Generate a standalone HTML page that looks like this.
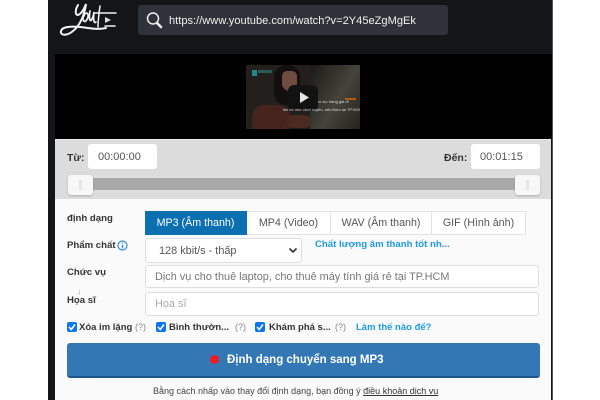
<!DOCTYPE html>
<html><head><meta charset="utf-8">
<style>
*{box-sizing:border-box}
html,body{margin:0;padding:0;width:600px;height:400px;overflow:hidden;background:#fff;font-family:"Liberation Sans","Noto Sans CJK SC",sans-serif}
#w{position:absolute;left:0;top:0;width:600px;height:400px;filter:blur(.35px)}
.a{position:absolute;white-space:nowrap}
.lbl{font-size:9.6px;font-weight:bold;color:#333;line-height:12px}
.inp{background:#fff;border:1px solid #ddd;border-radius:3px;font-size:10.9px;color:#666;line-height:23px;padding-left:9px}
.tab{top:211px;height:24px;border:1px solid #e3e3e3;border-left:none;background:#fff;font-size:10.7px;color:#555;text-align:center;line-height:23px}
.cb{width:10px;height:10px;background:#0a76f0;border-radius:2px;top:322px}
.cl{top:322px;font-size:9.5px;font-weight:bold;color:#333;line-height:12px}
.q{top:321px;font-size:9px;color:#888;line-height:12px}
</style></head><body><div id="w">
<div class="a" style="left:48px;top:0;width:505px;height:400px;background:#141516;border-right:1px solid #555"></div>
<div class="a" style="left:55px;top:54px;width:497px;height:85px;background:#000"></div>
<div class="a" style="left:55px;top:139px;width:496px;height:261px;background:#fafafa"></div>

<svg class="a" style="left:58px;top:2px" width="62" height="36" viewBox="0 0 62 36" fill="none" stroke="#f2f2f2" stroke-linecap="round">
<path d="M20 3C17 8 17 13 20 13C23 12 26 7 28 2C27 10 23 23 15 29C9 34 2 34 3 29C4 25 12 24 22 25C32 26 40 28 48 26" stroke-width="2"/>
<path d="M26 10C23 21 28 22 30 15C31 10 27 10 26 14M32 9C30 21 34 22 36 10C35 18 36 22 38 20" stroke-width="1.700"/>
<path d="M42 4C41 11 40 18 40 25M36 11L58 11M47 24L57 24" stroke-width="1.500"/>
<path d="M47 15L53 18L47 21Z" fill="#ddd" stroke="none"/>
</svg>

<div class="a" style="left:138px;top:5px;width:310px;height:30px;background:#2f3238;border-radius:3px"></div>
<svg class="a" style="left:145px;top:11px" width="20" height="18" viewBox="0 0 20 18" fill="none" stroke="#f0f0f0">
<circle cx="8" cy="7.500" r="5.500" stroke-width="1.500"/><path d="M12 12L16 16" stroke-width="2.600" stroke-linecap="round"/>
</svg>
<div class="a" style="left:169px;top:14px;font-size:11.1px;line-height:14px;color:#f0f0f0">https://www.youtube.com/watch?v=2Y45eZgMgEk</div>

<div class="a" style="left:246px;top:65px;width:114px;height:64px;background:#231f1c;overflow:hidden">
<div class="a" style="left:64px;top:0;width:50px;height:64px;background:linear-gradient(120deg,#1a1915,#45443a 55%,#25231e)"></div>
<div class="a" style="left:28px;top:0;width:26px;height:40px;background:#120f0e;border-radius:12px"></div>
<div class="a" style="left:36px;top:6px;width:15px;height:20px;background:#6e4c3e;border-radius:6px 6px 9px 9px"></div>
<div class="a" style="left:6px;top:40px;width:38px;height:24px;background:#46231d;border-radius:12px 12px 0 0"></div>
<div class="a" style="left:42px;top:20px;width:30px;height:26px;background:#121212;border-radius:6px"></div>
<div class="a" style="left:41px;top:50px;width:24px;height:13px;background:#4c2a22;border-radius:6px"></div>
<div class="a" style="left:6px;top:5px;width:5px;height:6px;background:#1f8a8a"></div>
<div class="a" style="left:12px;top:5px;width:14px;height:3px;background:#2d5a55"></div>
<svg class="a" style="left:54px;top:27px" width="10" height="12"><path d="M0 0L9 5.500L0 11Z" fill="#e6e6e6"/></svg>
<div class="a" style="left:72px;top:34px;font-size:4px;line-height:5px;color:#ddd">ví dụ: hàng giá rẻ</div>
<div class="a" style="left:37px;top:42px;font-size:4px;line-height:5px;color:#ddd">khi nó như chơi xuyên, nếu thức tại TP.HCM</div>
<div class="a" style="left:99px;top:33px;width:11px;height:1.500px;background:#b55a18"></div>
</div>

<div class="a" style="left:55px;top:139px;width:496px;height:60px;background:#dcdcdc;border-top:1px solid #eee"></div>
<div class="a lbl" style="left:67px;top:152px;font-size:10.5px">Từ:</div>
<div class="a" style="left:88px;top:144px;width:69px;height:25px;background:#fff;border-radius:3px;font-size:11px;color:#555;line-height:27px;padding-left:10px">00:00:00</div>
<div class="a lbl" style="left:444px;top:152px;font-size:10.5px">Đến:</div>
<div class="a" style="left:471px;top:144px;width:69px;height:25px;background:#fff;border-radius:3px;font-size:11px;color:#555;line-height:27px;padding-left:9px">00:01:15</div>
<div class="a" style="left:80px;top:178px;width:450px;height:12px;background:#a9a9a9"></div>
<div class="a" style="left:68px;top:175px;width:25px;height:20px;background:#f7f7f7;border-radius:3px;box-shadow:0 1px 2px rgba(0,0,0,.2)"><div class="a" style="left:11px;top:5px;width:3px;height:10px;background:#e6e6e6"></div></div>
<div class="a" style="left:515px;top:175px;width:25px;height:20px;background:#f7f7f7;border-radius:3px;box-shadow:0 1px 2px rgba(0,0,0,.2)"><div class="a" style="left:11px;top:5px;width:3px;height:10px;background:#e6e6e6"></div></div>

<div class="a lbl" style="left:67px;top:213px">định dạng</div>
<div class="a tab" style="left:145px;width:102px;background:#0b6fb0;color:#fff;border-color:#0b6fb0">MP3 (Âm thanh)</div>
<div class="a tab" style="left:247px;width:84px">MP4 (Video)</div>
<div class="a tab" style="left:331px;width:101px">WAV (Âm thanh)</div>
<div class="a tab" style="left:432px;width:94px;">GIF (Hình ảnh)</div>

<div class="a lbl" style="left:67px;top:240px">Phẩm chất</div>
<svg class="a" style="left:117px;top:240px" width="11" height="11" viewBox="0 0 11 11"><circle cx="5.500" cy="5.500" r="4.500" fill="none" stroke="#2e8fd8" stroke-width="1.200"/><path d="M5.500 2.500V3.700M5.500 4.800V8.500" stroke="#2e8fd8" stroke-width="1.300"/></svg>
<div class="a inp" style="left:145px;top:238px;width:157px;height:25px;line-height:24px;color:#555;padding-left:13px">128 kbit/s - thấp</div>
<svg class="a" style="left:288px;top:247px" width="10" height="7"><path d="M1.500 1.500L5 5L8.500 1.500" fill="none" stroke="#333" stroke-width="1.600"/></svg>
<div class="a" style="left:315px;top:238px;font-size:9.600px;font-weight:bold;color:#1e9be0;line-height:13px">Chất lượng âm thanh tốt nh...</div>

<div class="a lbl" style="left:67px;top:267px">Chức vụ</div>
<div class="a inp" style="left:145px;top:265px;width:394px;height:23px;color:#777">Dịch vụ cho thuê laptop, cho thuê máy tính giá rẻ tại TP.HCM</div>
<div class="a" style="left:77px;top:286px;font-size:9px;color:#aaa;line-height:10px">↓</div>
<div class="a lbl" style="left:67px;top:295px">Họa sĩ</div>
<div class="a inp" style="left:145px;top:292px;width:394px;height:24px;color:#aaa">Họa sĩ</div>

<div class="a cb" style="left:67px"></div>
<svg class="a" style="left:67px;top:322px" width="10" height="10"><path d="M2 5L4.200 7.500L8 2.500" fill="none" stroke="#fff" stroke-width="1.600"/></svg>
<div class="a cl" style="left:79px">Xóa im lặng</div><div class="a q" style="left:135px">(?)</div>
<div class="a cb" style="left:156px"></div>
<svg class="a" style="left:156px;top:322px" width="10" height="10"><path d="M2 5L4.200 7.500L8 2.500" fill="none" stroke="#fff" stroke-width="1.600"/></svg>
<div class="a cl" style="left:169px">Bình thườn...</div><div class="a q" style="left:235px">(?)</div>
<div class="a cb" style="left:255px"></div>
<svg class="a" style="left:255px;top:322px" width="10" height="10"><path d="M2 5L4.200 7.500L8 2.500" fill="none" stroke="#fff" stroke-width="1.600"/></svg>
<div class="a cl" style="left:269px">Khám phá s...</div><div class="a q" style="left:335px">(?)</div>
<div class="a" style="left:356px;top:322px;font-size:9.500px;font-weight:bold;color:#1e9be0;line-height:12px">Làm thế nào để?</div>

<div class="a" style="left:67px;top:343px;width:473px;height:35px;background:#3377b4;border-radius:3px;border-bottom:2px solid #1f5688"></div>
<div class="a" style="left:210px;top:355px;width:9px;height:9px;border-radius:50%;background:#ee1c25"></div>
<div class="a" style="left:227px;top:352px;font-size:11.500px;font-weight:bold;color:#fff;line-height:16px">Định dạng chuyển sang MP3</div>

<div class="a" style="left:153px;top:385px;font-size:9px;color:#444;line-height:13px">Bằng cách nhấp vào thay đổi định dạng, bạn đồng ý <span style="text-decoration:underline;color:#333">điều khoản dịch vụ</span></div>
</div></body></html>
